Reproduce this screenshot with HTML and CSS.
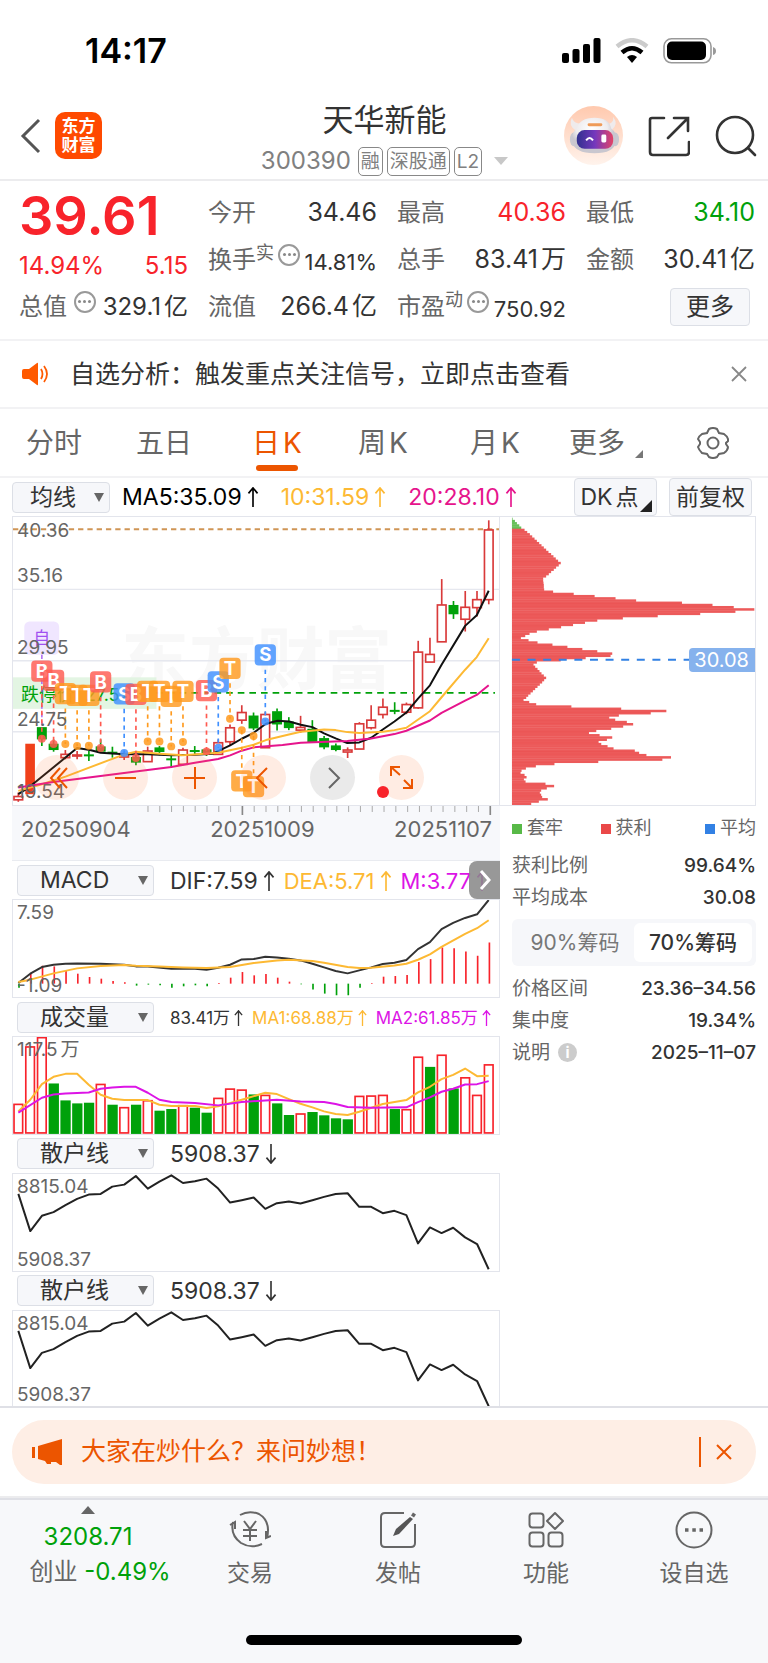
FILE: index.html
```html
<!DOCTYPE html>
<html lang="zh-CN">
<head>
<meta charset="utf-8">
<meta name="viewport" content="width=device-width, initial-scale=1">
<title>天华新能 300390</title>
<link rel="stylesheet" href="styles.css">
</head>
<body>
<div class="status">
  <span class="clock">14:17</span>
  <svg class="status-icons" viewBox="0 0 154 26" width="154" height="26" aria-hidden="true">
    <rect x="0" y="15" width="7" height="10" rx="2"/><rect x="10.500" y="11" width="7" height="14" rx="2"/><rect x="21" y="6" width="7" height="19" rx="2"/><rect x="31.500" y="0" width="7" height="25" rx="2"/>
    <g fill="none" stroke-width="4.500"><path d="M55 8.500Q70-4 85 8.500" stroke="#ccc"/><path d="M60 14.500q10-8.500 20 0" stroke="#000"/></g>
    <path d="M65 19q5-4 10 0l-5 6z"/>
    <rect x="102" y="0.800" width="47" height="24" rx="7.500" fill="none" stroke="#999" stroke-width="1.600"/><rect x="105" y="3.500" width="39" height="18.500" rx="5"/><path d="M151 9q3 1 3 4t-3 4z" fill="#999"/>
  </svg>
</div>
<header class="header">
  <div class="header-left">
    <button class="icon-btn" aria-label="返回"><svg width="22" height="36" viewBox="0 0 22 36"><path d="M19 2L3 18l16 16" fill="none" stroke="#555" stroke-width="3"/></svg></button>
    <div class="logo"><span>东方</span><span>财富</span></div>
  </div>
  <div class="heading">
    <h1 class="title">天华新能</h1>
    <div class="subtitle"><span>300390</span><span class="tag">融</span><span class="tag">深股通</span><span class="tag">L2</span><i class="down"></i></div>
  </div>
  <div class="header-right">
    <button class="icon-btn avatar" aria-label="妙想助手">
      <svg width="59" height="59" viewBox="0 0 60 60">
        <defs><linearGradient id="skin" x1="0" y1="0" x2="0" y2="1"><stop offset="0" stop-color="#ffc9ae"/><stop offset="1" stop-color="#fff3ec"/></linearGradient>
        <linearGradient id="visor"><stop offset="0" stop-color="#31308e"/><stop offset=".5" stop-color="#7538bd"/><stop offset="1" stop-color="#e34467"/></linearGradient>
        <radialGradient id="shell" cx=".45" cy=".3"><stop offset="0" stop-color="#fff"/><stop offset=".7" stop-color="#eeecee"/><stop offset="1" stop-color="#c9c7cf"/></radialGradient></defs>
        <circle cx="30" cy="30" r="30" fill="url(#skin)"/>
        <path d="M12 25q-8-5-4-13 2 6 9 6zM46 18q5-1 4-7 6 8-2 14z" fill="#efebec"/>
        <ellipse cx="10" cy="34" rx="4" ry="7" fill="#c9c9d1"/><ellipse cx="52" cy="34" rx="4" ry="7" fill="#c9c9d1"/>
        <path d="M8 36Q8 26 13 23 16 12 31 12T48 23q6 4 5 13-2 12-22 12T8 36z" fill="url(#shell)"/>
        <rect x="24" y="17.500" width="15" height="3" rx="1.500" fill="#ef9b58"/>
        <rect x="13" y="24.500" width="37" height="19" rx="8" fill="url(#visor)"/>
        <path d="M22.500 35q3.500-5 7 0" fill="none" stroke="#fff" stroke-width="2"/><rect x="38" y="29" width="5" height="8" rx="1.500" fill="#fff"/>
      </svg>
    </button>
    <button class="icon-btn" aria-label="分享"><svg width="42" height="42" viewBox="0 0 42 42" fill="none" stroke="#333" stroke-width="2.600" stroke-linecap="round"><path d="M16 3H4q-2 0-2 2v32q0 3 3 3h33q3 0 3-3V27M26 3h14v13M39 4L20 23"/></svg></button>
    <button class="icon-btn" aria-label="搜索"><svg width="42" height="42" viewBox="0 0 42 42" fill="none" stroke="#333" stroke-width="2.600" stroke-linecap="round"><circle cx="20" cy="20" r="18"/><path d="M33 33l7 7"/></svg></button>
  </div>
</header>

<section class="quote">
  <div class="cell price red">39.61</div>
  <div class="cell"><span>今开</span><b>34.46</b></div>
  <div class="cell"><span>最高</span><b class="red">40.36</b></div>
  <div class="cell"><span>最低</span><b class="green">34.10</b></div>
  <div class="cell red change"><span>14.94%</span><span>5.15</span></div>
  <div class="cell"><span>换手<sup>实</sup></span><i class="dots"></i><b class="small">14.81%</b></div>
  <div class="cell"><span>总手</span><b>83.41<u>万</u></b></div>
  <div class="cell"><span>金额</span><b>30.41<u>亿</u></b></div>
  <div class="cell"><span>总值</span><i class="dots"></i><b class="mid">329.1<u>亿</u></b></div>
  <div class="cell"><span>流值</span><b>266.4<u>亿</u></b></div>
  <div class="cell"><span>市盈<sup>动</sup></span><i class="dots"></i><b class="small">750.92</b></div>
  <div class="cell end"><button class="more">更多</button></div>
</section>

<div class="notice">
  <svg width="28" height="24" viewBox="0 0 28 24"><path d="M2 7h5l8-6q1-1 1 1v20q0 2-1 1l-8-6H2q-2 0-2-2V9q0-2 2-2z" fill="#ff5a00"/><path d="M19 7q3 5 0 10M22 4q6 8 0 16" fill="none" stroke="#ff5a00" stroke-width="1.800"/></svg>
  <span class="notice-text">自选分析：触发重点关注信号，立即点击查看</span>
  <button class="icon-btn" aria-label="关闭"><svg width="16" height="16" viewBox="0 0 16 16"><path d="M1 1l14 14M15 1L1 15" stroke="#888" stroke-width="1.800"/></svg></button>
</div>

<nav class="tabs">
  <button class="tab">分时</button><button class="tab">五日</button><button class="tab active">日<u>K</u></button><button class="tab">周<u>K</u></button><button class="tab">月<u>K</u></button><button class="tab corner">更多</button>
  <button class="tab" aria-label="设置"><svg width="32" height="32" viewBox="0 0 32 32" fill="none" stroke="#666" stroke-width="2"><path d="M12 2q4-2 8 0l2 4 5 1q3 2 4 5v2l-2 2v1l2 3q0 3-4 6l-5 1-2 3q-4 2-8 0l-2-3-5-1q-3-3-4-6l2-3v-2L1 12q1-3 4-5l5-1z"/><circle cx="16" cy="16" r="5.500"/></svg></button>
</nav>

<main class="board">
  <div class="toolbar">
    <label class="pick pick-short"><select aria-label="主图指标"><option>均线</option></select></label>
    <span class="black">MA5:35.09<svg class="arw" viewBox="0 0 12 22"><path d="M6 22V2M1 7l5-6 5 6"/></svg></span>
    <span class="amber">10:31.59<svg class="arw" viewBox="0 0 12 22"><path d="M6 22V2M1 7l5-6 5 6"/></svg></span>
    <span class="pink">20:28.10<svg class="arw" viewBox="0 0 12 22"><path d="M6 22V2M1 7l5-6 5 6"/></svg></span>
    <div class="tools"><button class="tool dk">DK<u>点</u></button><button class="tool">前复权</button></div>
  </div>
  <div class="columns">
    <div class="left">
      <div class="chart main-chart">
        <span class="axis a1">40.36</span><span class="axis a2">35.16</span><span class="axis a3">29.95</span><span class="axis a4">24.75</span><span class="axis a5">19.54</span>
        <svg id="kline" viewBox="38 20 1464 868"></svg>
        <div class="controls">
          <button aria-label="最左"><svg viewBox="0 0 45 45"><path d="M26 13L17 23l9 10M33 13l-9 10 9 10"/></svg></button>
          <button aria-label="缩小"><svg viewBox="0 0 45 45"><path d="M12 23h21"/></svg></button>
          <button aria-label="放大"><svg viewBox="0 0 45 45"><path d="M12 23h21M23 12v22"/></svg></button>
          <button aria-label="左移"><svg viewBox="0 0 45 45"><path d="M26 13L16 23l10 10"/></svg></button>
          <button class="grey" aria-label="右移"><svg viewBox="0 0 45 45"><path d="M19 13l10 10-10 10"/></svg></button>
          <button class="full" aria-label="全屏"><svg viewBox="0 0 45 45"><path d="M21 12h-9v9M12 12l9 8M25 25l8 8M33 24v9h-9"/></svg></button>
        </div>
      </div>
      <div class="dates">
        <svg id="ticks" viewBox="36 886 1464 28"></svg>
        <div class="date-row"><span>20250904</span><span>20251009</span><span>20251107</span></div>
      </div>
      <div class="ind">
        <label class="pick"><select aria-label="指标一"><option>MACD</option></select></label>
        <span>DIF:7.59<svg class="arw" viewBox="0 0 12 22"><path d="M6 22V2M1 7l5-6 5 6"/></svg></span>
        <span class="amber">DEA:5.71<svg class="arw" viewBox="0 0 12 22"><path d="M6 22V2M1 7l5-6 5 6"/></svg></span>
        <span class="violet">M:3.77<svg class="arw" viewBox="0 0 12 22"><path d="M6 22V2M1 7l5-6 5 6"/></svg></span>
        <button class="slide" aria-label="展开"><svg width="12" height="20" viewBox="0 0 12 20"><path d="M2 1l8 9-8 9" fill="none" stroke="#fff" stroke-width="3"/></svg></button>
      </div>
      <div class="chart"><span class="axis top">7.59</span><span class="axis bottom">-1.09</span><svg id="macd" viewBox="38 150 1464 292"></svg></div>
      <div class="ind compact">
        <label class="pick"><select aria-label="指标二"><option>成交量</option></select></label>
        <span>83.41万<svg class="arw" viewBox="0 0 12 22"><path d="M6 22V2M1 7l5-6 5 6"/></svg></span>
        <span class="amber">MA1:68.88万<svg class="arw" viewBox="0 0 12 22"><path d="M6 22V2M1 7l5-6 5 6"/></svg></span>
        <span class="violet">MA2:61.85万<svg class="arw" viewBox="0 0 12 22"><path d="M6 22V2M1 7l5-6 5 6"/></svg></span>
      </div>
      <div class="chart"><span class="axis top">117.5<u>万</u></span><svg id="volume" viewBox="38 561 1464 292"></svg></div>
      <div class="ind">
        <label class="pick"><select aria-label="指标三"><option>散户线</option></select></label>
        <span>5908.37<svg class="arw" viewBox="0 0 12 22"><path d="M6 0v20M1 15l5 6 5-6"/></svg></span>
      </div>
      <div class="chart"><span class="axis top">8815.04</span><span class="axis bottom">5908.37</span><svg id="retail1" viewBox="38 130 1464 292"></svg></div>
      <div class="ind">
        <label class="pick"><select aria-label="指标四"><option>散户线</option></select></label>
        <span>5908.37<svg class="arw" viewBox="0 0 12 22"><path d="M6 0v20M1 15l5 6 5-6"/></svg></span>
      </div>
      <div class="chart last"><span class="axis top">8815.04</span><span class="axis bottom">5908.37</span><svg id="retail2" viewBox="38 130 1464 286"></svg></div>
    </div>
    <aside class="right">
      <div class="chips-box"><svg id="chips" viewBox="0 20 768 868"></svg><span class="avg">30.08</span></div>
      <div class="legend"><span class="k1">套牢</span><span class="k2">获利</span><span class="k3">平均</span></div>
      <div class="row"><span>获利比例</span><b>99.64%</b></div>
      <div class="row"><span>平均成本</span><b>30.08</b></div>
      <div class="seg"><button>90%筹码</button><button class="on">70%筹码</button></div>
      <div class="row"><span>价格区间</span><b>23.36–34.56</b></div>
      <div class="row"><span>集中度</span><b>19.34%</b></div>
      <div class="row"><span>说明<i class="info">i</i></span><b>2025–11–07</b></div>
    </aside>
  </div>
</main>

<div class="promo-wrap">
  <div class="promo">
    <svg width="31" height="26" viewBox="0 0 31 26" fill="#ec5500"><path d="M0 8h3v11H0zM6 7L30 0v26h-2l-4-3h-5v2h-4l-2-3-7-2z"/></svg>
    <a class="promo-text" href="#">大家在炒什么？来问妙想！</a>
    <button class="icon-btn promo-close" aria-label="关闭"><svg width="16" height="16" viewBox="0 0 16 16"><path d="M1 1l14 14M15 1L1 15" stroke="#ec5500" stroke-width="2"/></svg></button>
  </div>
</div>

<footer class="footer">
  <nav class="dock">
    <button class="index"><i class="up"></i><span class="green">3208.71</span><span>创业 <em class="green">-0.49%</em></span></button>
    <button><svg width="42" height="38" viewBox="0 0 42 38"><path d="M11 4Q20-1 30 3q12 7 8 24M4 11q-3 13 8 21 10 6 21 1M1 14l5-3v7M42 25l-5 2v-7M15 10l6 8 6-8M21 18v12M14 19h14M14 25h14"/></svg>交易</button>
    <button><svg width="38" height="38" viewBox="0 0 38 38"><path d="M25 2H6Q2 2 2 6v26q0 4 4 4h26q4 0 4-4V13"/><path d="M14 25l3-7L31 6l3 2-14 15z" fill="#555" stroke="none"/><path d="M33 3l3 2" stroke-width="3.500"/></svg>发帖</button>
    <button><svg width="36" height="36" viewBox="0 0 36 36"><rect x="1.500" y="1.500" width="14" height="14" rx="3"/><rect x="1.500" y="20.500" width="14" height="14" rx="3"/><rect x="20.500" y="20.500" width="14" height="14" rx="3"/><path d="M27 1l8 8-8 8-8-8z" stroke-linejoin="round"/></svg>功能</button>
    <button><svg width="38" height="38" viewBox="0 0 38 38"><circle cx="19" cy="19" r="17.500"/><path d="M10 19h3.500M17.300 19h3.500M24.500 19H28" stroke-width="3.500"/></svg>设自选</button>
  </nav>
  <div class="home"></div>
</footer>
<script src="charts.js"></script>
</body>
</html>
```
FILE: styles.css
```css
* { box-sizing: border-box; }
body { margin: 0; background: #fff; color: #333; font-family: Inter, "Noto Sans CJK SC", sans-serif; font-size: 24px; line-height: 1; }
button, select { font: inherit; color: inherit; border: 0; background: none; padding: 0; margin: 0; }
b, h1, i, em { font-weight: 400; font-style: normal; }
u { text-decoration: none; margin-left: 3px; }
svg { display: block; }
.red { color: #f8232b; }
.green { color: #00a10a; }
.amber { color: #fdb933; }
.pink { color: #e6148c; }
.violet { color: #dc14e6; }
.black { color: #000; }

.status { display: flex; justify-content: space-between; align-items: center; height: 100px; padding: 2px 52px 0 85px; color: #000; }
.clock { font-size: 34px; font-weight: 600; }

.header { display: grid; grid-template-columns: 1fr auto 1fr; align-items: center; height: 81px; padding: 0 11px 0 12px; border-bottom: 2px solid #ececee; }
.header-left, .header-right { display: flex; align-items: center; }
.header-left { gap: 13px; padding: 0 0 8px 8px; }
.header-right { justify-content: flex-end; gap: 25px; padding-bottom: 8px; }
.icon-btn { display: block; flex: none; }
.logo { display: flex; flex-direction: column; justify-content: center; align-items: center; width: 47px; height: 47px; border-radius: 10px; background: #ff4a00; color: #fff; font-size: 17px; line-height: 19px; font-weight: 700; }
.heading { display: flex; flex-direction: column; align-items: center; gap: 9px; padding-bottom: 2px; }
.title { margin: 0; font-size: 31px; line-height: 36px; }
.subtitle { display: flex; align-items: center; gap: 4px; color: #808080; font-size: 24px; }
.tag { border: 1px solid #888; border-radius: 5px; padding: 0 2px; font-size: 19px; line-height: 27px; }
.subtitle span:first-child { padding-right: 3px; }
.down { border: 7px solid transparent; border-top: 8px solid #c8c8c8; border-bottom: 0; margin-left: 8px; }

.quote { display: grid; grid-template-columns: repeat(4, 1fr); grid-auto-rows: 47px; column-gap: 20px; padding: 8px 13px 9px 19px; border-bottom: 2px solid #f2f2f4; }
.cell { display: flex; align-items: center; justify-content: space-between; white-space: nowrap; }
.cell > span { color: #666; }
.cell b { font-size: 25px; }
.cell b.mid { font-size: 24px; }
.cell b.small { font-size: 22px; padding-top: 4px; }
.cell.price { font-size: 54px; font-weight: 600; padding-top: 7px; }
.cell.change { padding-top: 12px; }
.cell.change > span { color: inherit; }
.cell sup { font-size: 18px; line-height: 10px; vertical-align: 9px; }
.cell.end { justify-content: flex-end; padding-right: 5px; }
.dots { display: flex; align-items: center; justify-content: center; width: 22px; height: 22px; margin-bottom: 10px; border: 2px solid #999; border-radius: 50%; }
.dots::before { content: ""; width: 3px; height: 3px; border-radius: 50%; background: #888; box-shadow: -5px 0 #888, 5px 0 #888; }
.more { width: 80px; height: 38px; background: #f6f7fa; border: 1px solid #dcdfe6; border-radius: 4px; }

.notice { display: flex; align-items: center; height: 68px; padding: 0 21px 0 22px; border-bottom: 2px solid #f2f2f4; }
.notice-text { flex: 1; padding-left: 20px; font-size: 25px; }
.tabs { display: grid; grid-template-columns: 110fr 116fr 106fr 112fr 99fr 128fr 33fr; align-items: center; justify-items: start; height: 69px; padding: 0 38px 0 26px; border-bottom: 2px solid #f2f2f4; color: #666; font-size: 28px; }
.tab { position: relative; height: 67px; }
.tab.active { color: #ec5500; }
.tab.active::after { content: ""; position: absolute; left: 4px; right: 4px; bottom: 5px; height: 6px; border-radius: 3px; background: #ec5500; }
.corner::after { content: ""; position: absolute; right: -18px; bottom: 18px; border: 4px solid #777; border-top-color: transparent; border-left-color: transparent; }

.board { padding: 0 12px; }
.toolbar { display: flex; align-items: center; gap: 22px; height: 38px; white-space: nowrap; }
.toolbar > span { font-size: 23px; }
.toolbar > label { margin-right: -10px; }
.tools { display: flex; gap: 12px; margin-left: auto; padding-right: 4px; }
.tool { position: relative; width: 83px; height: 38px; background: #f6f7fa; border: 1px solid #dcdfe6; border-radius: 4px; font-size: 23px; }
.dk { padding-right: 12px; }
.dk::after { content: ""; position: absolute; right: 4px; bottom: 3px; border: 6px solid #222; border-top-color: transparent; border-left-color: transparent; }
.pick { position: relative; display: block; flex: none; width: 137px; height: 31px; }
.pick::after { content: ""; position: absolute; right: 6px; top: 11px; border: 5px solid transparent; border-top: 9px solid #666; border-bottom: 0; }
.pick select { appearance: none; width: 100%; height: 31px; padding: 0 0 0 22px; background: #f6f7fa; border: 1px solid #dcdfe6; border-radius: 4px; color: #333; font-size: 23px; }
.pick.pick-short { width: 98px; }
.pick-short select { padding-left: 17px; }
.arw { display: inline-block; width: 12px; height: 20px; margin-left: 5px; vertical-align: -2px; fill: none; stroke: currentColor; stroke-width: 1.800; }

.columns { display: grid; grid-template-columns: minmax(0, 488fr) minmax(0, 256fr); }
.chart { position: relative; border: 1px solid #e3e5ec; }
.chart svg { width: 100%; height: auto; }
.chart.last { border-bottom: 0; }
.axis { position: absolute; left: 4px; color: #666; font-size: 19px; line-height: 20px; }
.a1 { top: 4px; } .a2 { top: 49px; } .a3 { top: 121px; } .a4 { top: 193px; } .a5 { top: 265px; }
.axis.top { top: 3px; }
.axis.bottom { bottom: 1px; }
.controls { position: absolute; left: 21px; bottom: 5px; display: flex; gap: 24px; }
.controls button { width: 45px; height: 45px; border-radius: 50%; background: #ff783c24; }
.controls svg { fill: none; stroke: #ec5500; stroke-width: 2; }
.controls .grey { background: #e2e2e2bb; }
.controls .grey svg { stroke: #666; }
.full { position: relative; }
.full::after { content: ""; position: absolute; left: -2px; bottom: 2px; width: 12px; height: 12px; border-radius: 50%; background: #f8232b; }
.dates { height: 55px; background: #f7f8fb; border-bottom: 1px solid #e9ebf0; }
.dates svg { width: 100%; height: auto; }
.date-row { display: flex; justify-content: space-between; padding: 3px 8px 0 9px; color: #666; font-size: 22px; line-height: 22px; }
.ind { position: relative; display: flex; align-items: center; gap: 9px; height: 38px; padding-left: 5px; white-space: nowrap; overflow: hidden; }
.ind label { margin-right: 7px; }
.ind span { font-size: 23px; padding-top: 2px; }
.ind:not(.compact) .amber, .ind:not(.compact) .violet { font-size: 22px; }
.ind.compact span { font-size: 17px; }
.compact .arw { height: 16px; width: 9px; margin-left: 4px; }
.slide { position: absolute; right: 0; top: 0; width: 31px; height: 38px; display: flex; align-items: center; justify-content: center; border-radius: 8px 0 0 8px; background: #888888dd; }

.chips-box { position: relative; border: 1px solid #e3e5ec; border-left: 0; }
.chips-box svg { width: 100%; height: auto; }
.avg { position: absolute; right: 0; top: 131px; padding: 0 6px 0 5px; border-radius: 4px 0 0 4px; background: #86b2ed; color: #fff; font-size: 20px; line-height: 24px; }
.legend { display: flex; justify-content: space-between; align-items: center; height: 43px; padding-left: 12px; color: #666; font-size: 18px; }
.legend span::before { content: ""; display: inline-block; width: 10px; height: 10px; margin-right: 5px; background: #58b947; }
.legend .k2 { padding-right: 16px; }
.legend .k2::before { background: #ea4848; }
.legend .k3::before { background: #3281e4; }
.row { display: flex; justify-content: space-between; align-items: center; height: 32px; padding-left: 12px; color: #666; font-size: 19px; }
.row b { color: #333; font-weight: 500; }
.seg { display: grid; grid-template-columns: 1fr 1fr; margin: 6px 0 6px 12px; padding: 4px; border-radius: 6px; background: #f6f7fa; font-size: 21px; color: #777; }
.seg button { height: 39px; border-radius: 6px; }
.seg .on { background: #fff; color: #333; font-weight: 500; }
.info { display: inline-block; width: 19px; height: 19px; margin-left: 8px; border-radius: 50%; background: #ccc; color: #fff; font-size: 15px; line-height: 19px; font-weight: 700; text-align: center; vertical-align: 1px; }

.promo-wrap { padding: 12px 12px; border-top: 2px solid #dfe0e6; border-bottom: 2px solid #ececee; }
.promo { display: flex; align-items: center; height: 64px; padding: 0 24px 0 20px; border-radius: 32px; background: #feeee5; }
.promo-text { flex: 1; padding-left: 18px; color: #ec5500; font-size: 25px; text-decoration: none; }
.promo-close { padding: 7px 0 7px 15px; border-left: 2px solid #ec5500; }
.footer { padding-bottom: 18px; border-top: 2px solid #dfe0e6; background: #f7f8fa; }
.dock { display: grid; grid-template-columns: 176fr 148fr 148fr 148fr 148fr; height: 135px; color: #666; }
.dock button { display: flex; flex-direction: column; align-items: center; gap: 12px; padding-top: 11px; font-size: 23px; line-height: 24px; }
.dock svg { height: 38px; fill: none; stroke: #666; stroke-width: 2; }
.dock .index { gap: 11px; padding: 6px 0 0 24px; font-size: 24px; }
.up, .index > .green { margin-right: 24px; }
.up { border: 7px solid transparent; border-bottom: 8px solid #666; border-top: 0; }
.home { width: 36%; height: 10px; margin: 0 auto; border-radius: 5px; background: #000; }
```
FILE: charts.js
```js
const STEP = 35.43;
const xAt = i => 54 + STEP * i;
const RED = '#d93a3a', GREEN = '#00a10a', AMBER = '#fdb933';
const rect = (x, y, w, h, extra) => `<rect x="${x}" y="${y}" width="${w}" height="${h}" ${extra}/>`;
const line = (x1, y1, x2, y2, color, width, extra = '') =>
  `<line x1="${x1}" y1="${y1}" x2="${x2}" y2="${y2}" stroke="${color}" stroke-width="${width}" ${extra}/>`;
const curve = (points, color, width = 6) =>
  `<polyline points="${points}" fill="none" stroke="${color}" stroke-width="${width}" stroke-linejoin="round"/>`;
const put = (id, html) => { document.getElementById(id).innerHTML = html; };

/* direction, wick top, body top, body bottom, wick bottom */
const candles = [
  ['r',850,862,872,878], null, ['g',655,655,688,710], ['g',690,705,720,727], ['r',722,735,745,750],
  ['r',725,737,740,750], ['g',725,737,739,755], ['g',690,713,725,730], ['g',712,729,732,745], ['r',728,733,743,752],
  ['g',735,745,758,768], ['r',712,725,757,757], ['g',710,716,726,738], ['g',735,749,751,776], ['r',715,722,765,768],
  ['g',710,724,726,736], ['g',718,722,732,740], ['r',690,700,735,735], ['r',645,655,697,708], ['r',587,609,632,643],
  ['g',609,620,655,662], ['r',607,615,715,715], ['g',597,607,643,663], ['g',623,638,654,662], ['r',619,654,662,670],
  ['g',632,660,696,696], ['g',680,688,712,720], ['g',702,710,720,726], ['r',714,722,728,746], ['r',638,643,719,719],
  ['r',587,632,655,660], ['r',567,593,615,627], ['g',578,603,605,614], ['r',579,585,608,614], ['r',393,427,595,598],
  ['r',384,434,457,457], ['r',207,285,396,396], ['g',273,287,311,327], ['r',243,292,328,365], ['r',243,269,293,320], ['r',30,59,269,283]
];
/* letter, candle index, badge y, dot y */
const signals = [
  ['B',2,484,688], ['B',3,512,704], ['T',4,552,704], ['T',5,557,710], ['T',6,557,709], ['B',7,517,716], ['S',9,553,731],
  ['B',10,554,746], ['T',11,545,696], ['T',12,545,696], ['T',13,560,711], ['T',14,545,698], ['B',16,543,726],
  ['S',17,517,715], ['T',18,476,628], ['S',21,435,636], ['T',19,815,662], ['T',20,832,680]
];
const tint = { B: '#ff5a50', T: '#ff9a1e', S: '#4090ff' };

let k = '';
k += `<text x="364" y="524" font-size="204" font-weight="700" fill="#f8f8f8">东方财富</text>`;
for (const y of [238, 453, 667]) k += line(36, y, 1504, y, '#e6e8ef', 4);
k += rect(38, 503, 432, 95, 'fill="#dcf3dc" opacity=".8"');
k += `<text x="62" y="573" font-size="54" fill="${GREEN}">跌停价: 27.57</text>`;
k += line(470, 550, 1490, 550, GREEN, 5, 'stroke-dasharray="20 15"');
k += line(38, 57, 1504, 57, '#cf9555', 6, 'stroke-dasharray="16 12"');
k += rect(72, 335, 105, 100, 'rx="16" fill="#ece0ff" opacity=".8"');
k += `<text x="125" y="404" font-size="50" text-anchor="middle" fill="#a050f0">自</text>`;
k += line(125, 435, 125, 655, '#a050f0', 4, 'stroke-dasharray="13 12"');
k += rect(75, 703, 29, 152, 'fill="#f0401a"');
candles.forEach((c, i) => {
  if (!c) return;
  const [d, hi, top, bot, lo] = c, x = xAt(i), color = d === 'r' ? RED : GREEN;
  k += line(x, hi, x, top, color, 5) + line(x, bot, x, lo, color, 5);
  k += d === 'r' ? rect(x - 13, top, 26, bot - top, `fill="#fff" stroke="${color}" stroke-width="5"`)
                 : rect(x - 15, top - 2, 30, bot - top + 4, `fill="${color}"`);
});
k += curve('54,855 89,832 231,716 270,722 302,730 373,735 444,735 515,738 586,736 640,733 692,708 727,688 763,670 800,643 835,634 870,636 905,646 940,653 975,672 1010,687 1045,701 1081,699 1117,685 1152,660 1187,636 1223,609 1258,567 1294,527 1329,465 1400,348 1435,316 1471,242', '#111');
k += curve('54,845 125,825 196,802 373,735 408,727 479,733 550,738 656,730 727,715 763,706 800,692 869,675 905,667 975,660 1010,662 1045,668 1081,671 1152,667 1187,662 1223,655 1294,605 1329,563 1400,480 1435,442 1471,385', AMBER);
k += curve('54,835 160,818 302,800 408,787 515,773 586,760 656,749 692,738 727,724 763,714 850,707 905,700 1045,695 1117,687 1187,674 1223,664 1294,633 1329,610 1400,573 1435,556 1471,527', '#e6148c');
for (const [t, i, y, dot] of signals) {
  const x = xAt(i), below = y > dot;
  k += line(x, below ? dot : y + 45, x, below ? y - 40 : dot, tint[t], 5, 'stroke-dasharray="13 12"');
  k += `<circle cx="${x}" cy="${dot}" r="12" fill="${tint[t]}" opacity=".85"/>`;
  k += rect(x - 32, y - 32, 64, 64, `rx="12" fill="${tint[t]}" opacity=".82"`);
  k += `<text x="${x}" y="${y + 20}" font-size="56" font-weight="700" text-anchor="middle" fill="#fff">${t}</text>`;
}
put('kline', k);

let ticks = '';
for (let i = 11; i <= 40; i++) {
  const major = i === 19 || i === 40;
  ticks += line(xAt(i), 886, xAt(i), major ? 914 : 904, major ? '#888' : '#aaa', major ? 5 : 3);
}
put('ticks', ticks);

const hist = [414,372,348,350,362,372,382,387,394,398,408,405,407,414,410,407,410,400,384,367,377,373,384,396,404,420,432,437,437,414,400,381,379,376,337,328,293,295,305,318,278];
let m = hist.map((y, i) => line(xAt(i) + 2, 402, xAt(i) + 2, y, y < 402 ? '#f8232b' : GREEN, 5)).join('');
m += curve('54,400 90,372 125,352 160,345 196,342 231,341 302,342 373,345 408,350 444,350 515,357 586,357 621,360 656,354 692,345 727,329 763,328 798,321 833,323 869,327 904,332 940,342 975,353 1010,364 1046,371 1081,362 1117,353 1152,343 1187,339 1223,331 1258,298 1294,277 1329,238 1364,219 1400,204 1436,193 1471,150', '#333');
m += curve('54,397 90,390 160,371 231,356 302,349 373,346 408,348 479,350 550,353 621,355 692,352 763,340 833,332 869,330 940,334 975,339 1046,352 1081,355 1117,354 1187,347 1223,342 1258,330 1294,314 1329,291 1400,252 1436,235 1471,211', AMBER);
put('macd', m);

const vol = 'r764 r591 r563 g701 g752 g761 g759 r704 g765 r774 g765 r753 g783 g778 r768 g774 g789 r746 r718 r721 g734 r737 g761 g796 r793 g787 g797 g806 g809 r740 r739 r737 g778 r780 r622 g651 r616 g716 r684 r737 r645'.split(' ');
let v = vol.map((s, i) => {
  const y = +s.slice(1), x = xAt(i);
  return s[0] === 'r' ? rect(x - 13, y, 26, 850 - y, 'fill="none" stroke="#f8232b" stroke-width="5"')
                      : rect(x - 15, y, 31, 853 - y, `fill="${GREEN}"`);
}).join('');
v += curve('54,785 90,750 125,703 160,681 196,672 231,672 266,705 302,735 337,747 373,751 444,751 479,765 515,769 586,769 621,775 656,770 727,750 798,729 833,733 869,748 904,762 940,773 975,785 1010,793 1046,796 1081,786 1152,763 1223,751 1258,728 1294,711 1329,688 1364,675 1400,656 1436,679 1471,678', AMBER);
v += curve('54,789 125,744 160,734 196,731 266,728 302,717 337,713 373,711 408,711 444,729 479,750 515,757 586,760 656,767 727,757 798,752 833,750 904,755 975,757 1010,763 1046,772 1117,774 1223,773 1258,757 1294,743 1329,726 1364,717 1400,704 1436,703 1471,694', '#dc14e6');
put('volume', v);

const retail = curve('54,190 90,302 125,256 160,245 196,224 231,205 266,192 302,190 337,168 373,162 408,136 444,174 479,153 515,134 550,157 586,152 621,144 656,174 692,216 727,209 763,201 798,235 833,218 869,213 904,219 940,209 975,199 1010,190 1046,188 1081,229 1117,229 1152,248 1187,241 1223,254 1258,339 1294,291 1329,308 1364,292 1400,321 1436,341 1471,417', '#222');
put('retail1', retail);
put('retail2', retail);

/* cost distribution: level, length */
const profile = [[25,2],[51,28],[57,38],[159,147],[206,94],[240,97],[246,124],[253,186],[259,249],[266,312],[272,374],[279,512],[285,604],[292,668],[299,730],[305,673],[311,567],[318,439],[325,334],[331,257],[338,220],[345,184],[351,148],[358,111],[365,75],[371,53],[378,40],[385,27],[391,50],[398,77],[405,122],[411,167],[418,212],[425,257],[432,302],[438,297],[445,222],[452,147],[458,75],[465,65],[505,103],[571,35],[578,52],[585,73],[591,179],[598,329],[605,465],[611,418],[618,322],[625,293],[631,311],[638,346],[645,365],[651,335],[658,299],[664,254],[671,232],[678,264],[685,302],[691,286],[698,261],[705,269],[711,288],[718,306],[724,370],[731,383],[737,405],[744,479],[750,453],[757,260],[764,128],[770,72],[777,42],[783,29],[790,26],[797,38],[803,44],[810,36],[817,41],[824,101],[830,127],[837,105],[843,88],[850,84],[857,88],[863,91],[870,108],[877,81],[883,58]];
const lengthAt = y => {
  const near = profile.find(p => Math.abs(p[0] - y) < 3.3);
  if (near) return near[1];
  const n = profile.findIndex(p => p[0] >= y);
  if (n <= 0) return n ? 58 : 2;
  const [y0, w0] = profile[n - 1], [y1, w1] = profile[n];
  return w0 + (w1 - w0) * (y - y0) / (y1 - y0);
};
let c = '';
for (let i = 0; i < 130; i++) {
  const y = 25 + i * 6.65;
  c += rect(36, y - 3, lengthAt(y).toFixed(0), 7.5, `fill="${y < 54 ? '#58b947' : '#ea4848'}" opacity=".9"`);
}
c += line(36, 450, 580, 450, '#3281e4', 6, 'stroke-dasharray="24 23"');
put('chips', c);
```
